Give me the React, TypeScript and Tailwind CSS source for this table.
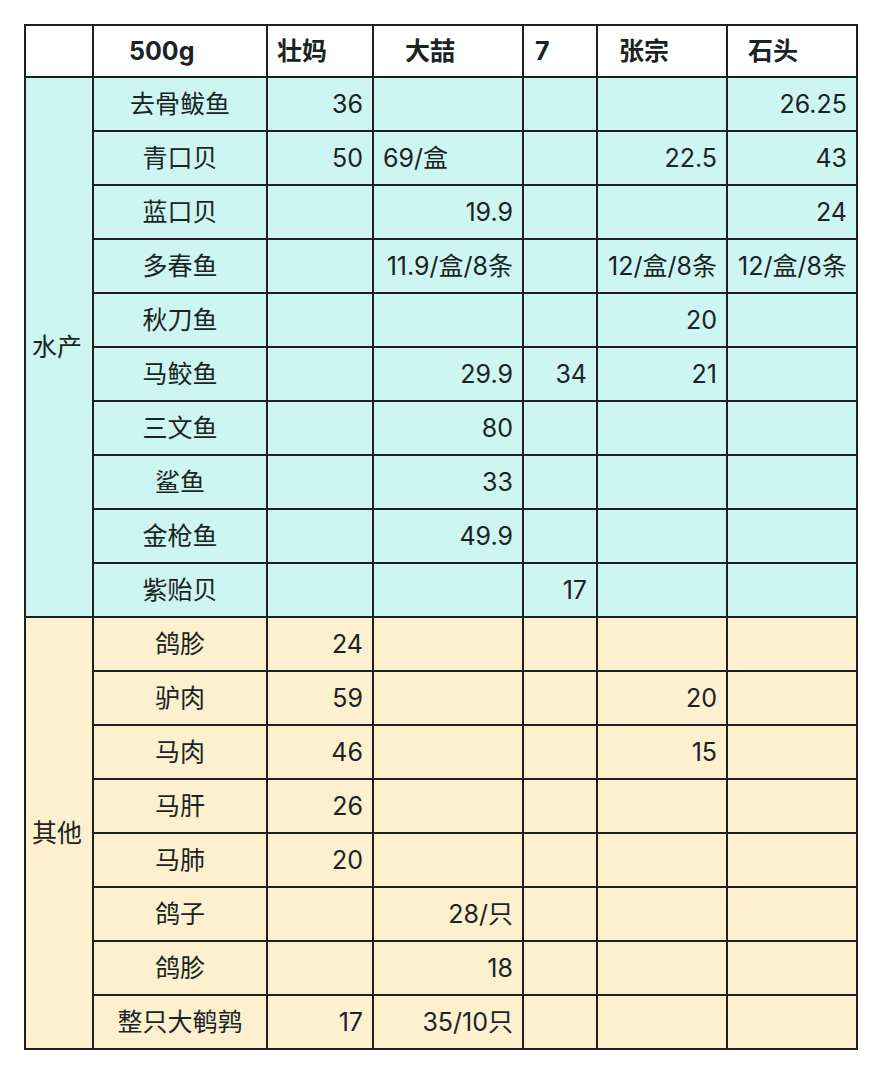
import React from "react";

type Row = { name: string; cells: (string | { t: string; left?: boolean })[] };

const aquatic: Row[] = [
  { name: "去骨鲅鱼", cells: ["36", "", "", "", "26.25"] },
  { name: "青口贝", cells: ["50", { t: "69/盒", left: true }, "", "22.5", "43"] },
  { name: "蓝口贝", cells: ["", "19.9", "", "", "24"] },
  { name: "多春鱼", cells: ["", "11.9/盒/8条", "", "12/盒/8条", "12/盒/8条"] },
  { name: "秋刀鱼", cells: ["", "", "", "20", ""] },
  { name: "马鲛鱼", cells: ["", "29.9", "34", "21", ""] },
  { name: "三文鱼", cells: ["", "80", "", "", ""] },
  { name: "鲨鱼", cells: ["", "33", "", "", ""] },
  { name: "金枪鱼", cells: ["", "49.9", "", "", ""] },
  { name: "紫贻贝", cells: ["", "", "17", "", ""] },
];

const others: Row[] = [
  { name: "鸽胗", cells: ["24", "", "", "", ""] },
  { name: "驴肉", cells: ["59", "", "", "20", ""] },
  { name: "马肉", cells: ["46", "", "", "15", ""] },
  { name: "马肝", cells: ["26", "", "", "", ""] },
  { name: "马肺", cells: ["20", "", "", "", ""] },
  { name: "鸽子", cells: ["", "28/只", "", "", ""] },
  { name: "鸽胗", cells: ["", "18", "", "", ""] },
  { name: "整只大鹌鹑", cells: ["17", "35/10只", "", "", ""] },
];

const cellBorder = "border-2 border-[#1e1f1f]";

function Group({ label, rows, bg }: { label: string; rows: Row[]; bg: string }) {
  return (
    <>
      {rows.map((r, i) => (
        <tr key={i} className={`h-[54px] ${bg}`}>
          {i === 0 && (
            <td rowSpan={rows.length} className={`${cellBorder} pl-[6px] text-left align-middle`}>
              {label}
            </td>
          )}
          <td className={`${cellBorder} text-center whitespace-nowrap`}>{r.name}</td>
          {r.cells.map((c, j) => {
            const t = typeof c === "string" ? c : c.t;
            const left = typeof c === "string" ? false : !!c.left;
            return (
              <td
                key={j}
                className={`${cellBorder} whitespace-nowrap ${left ? "text-left pl-[9px]" : "text-right pr-[9px]"}`}
              >
                {t}
              </td>
            );
          })}
        </tr>
      ))}
    </>
  );
}

export default function App() {
  return (
    <div
      className="bg-white w-[882px] h-[1074px] pt-[24px] pl-[24px] text-[#1b2424]"
      style={{ fontFamily: 'Inter, "Noto Sans CJK SC", sans-serif' }}
    >
      <table className="border-collapse table-fixed w-[834px] text-[25px] leading-none">
        <colgroup>
          <col className="w-[68px]" />
          <col className="w-[174px]" />
          <col className="w-[106px]" />
          <col className="w-[150px]" />
          <col className="w-[74px]" />
          <col className="w-[130px]" />
          <col className="w-[130px]" />
        </colgroup>
        <thead>
          <tr className="h-[52px] bg-white font-semibold">
            <th className={cellBorder}></th>
            <th className={`${cellBorder} text-left pl-[35px]`}>500g</th>
            <th className={`${cellBorder} text-left pl-[9px]`}>壮妈</th>
            <th className={`${cellBorder} text-left pl-[31px]`}>大喆</th>
            <th className={`${cellBorder} text-left pl-[11px]`}>7</th>
            <th className={`${cellBorder} text-left pl-[21px]`}>张宗</th>
            <th className={`${cellBorder} text-left pl-[20px]`}>石头</th>
          </tr>
        </thead>
        <tbody>
          <Group label="水产" rows={aquatic} bg="bg-[#cdf5f1]" />
          <Group label="其他" rows={others} bg="bg-[#fcf0cf]" />
        </tbody>
      </table>
    </div>
  );
}
